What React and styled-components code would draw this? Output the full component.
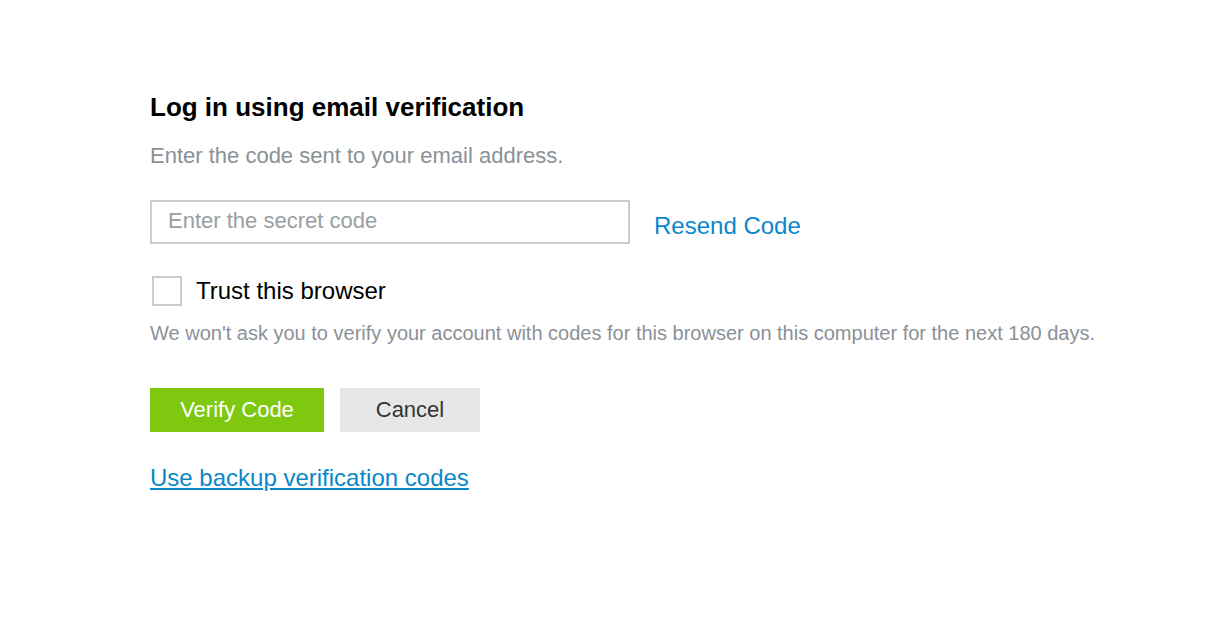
import React from "react";
import styled, { createGlobalStyle } from "styled-components";

const GlobalStyle = createGlobalStyle`
  body {
    margin: 0;
    background: #ffffff;
    font-family: "Liberation Sans", Arial, sans-serif;
  }
`;

const Page = styled.div`
  padding: 92px 0 0 150px;
`;

const Title = styled.h1`
  margin: 0;
  font-size: 26px;
  font-weight: bold;
  color: #000;
  line-height: 30px;
`;

const Subtitle = styled.p`
  margin: 21px 0 0;
  font-size: 22px;
  line-height: 26px;
  color: #8a9197;
`;

const CodeRow = styled.div`
  display: flex;
  align-items: center;
  gap: 24px;
  margin-top: 31px;
`;

const CodeInput = styled.input`
  box-sizing: border-box;
  width: 480px;
  height: 44px;
  border: 2px solid #cccccc;
  padding: 0 16px 3px;
  font-family: inherit;
  font-size: 22px;
  color: #333;
  outline: none;
  &::placeholder {
    color: #999ea3;
  }
`;

const TextLink = styled.a`
  font-size: 24px;
  color: #0a87c9;
  text-decoration: ${(p) => (p.$underline ? "underline" : "none")};
  cursor: pointer;
  margin-top: ${(p) => p.$offset || 0}px;
`;

const CheckRow = styled.label`
  display: flex;
  align-items: center;
  gap: 14px;
  margin-top: 32px;
  padding-left: 2px;
  font-size: 24px;
  line-height: 30px;
  color: #000;
`;

const Box = styled.span`
  box-sizing: border-box;
  width: 30px;
  height: 30px;
  border: 2px solid #cccccc;
  background: #fff;
`;

const Hint = styled.p`
  margin: 15px 0 0;
  font-size: 20px;
  line-height: 24px;
  color: #8a9197;
`;

const Actions = styled.div`
  display: flex;
  gap: 16px;
  margin-top: 43px;
`;

const Button = styled.button`
  height: 44px;
  width: ${(p) => p.$width}px;
  border: none;
  font-family: inherit;
  font-size: 22px;
  background: ${(p) => (p.$primary ? "#7ec80f" : "#e7e7e7")};
  color: ${(p) => (p.$primary ? "#ffffff" : "#333333")};
  cursor: pointer;
`;

const Footer = styled.div`
  margin-top: 32px;
`;

export default function App() {
  return (
    <>
      <GlobalStyle />
      <Page>
        <Title>Log in using email verification</Title>
        <Subtitle>Enter the code sent to your email address.</Subtitle>
        <CodeRow>
          <CodeInput placeholder="Enter the secret code" />
          <TextLink $offset={7}>Resend Code</TextLink>
        </CodeRow>
        <CheckRow>
          <Box />
          Trust this browser
        </CheckRow>
        <Hint>
          We won't ask you to verify your account with codes for this browser on this computer for the next 180 days.
        </Hint>
        <Actions>
          <Button $primary $width={174}>Verify Code</Button>
          <Button $width={140}>Cancel</Button>
        </Actions>
        <Footer>
          <TextLink $underline>Use backup verification codes</TextLink>
        </Footer>
      </Page>
    </>
  );
}
